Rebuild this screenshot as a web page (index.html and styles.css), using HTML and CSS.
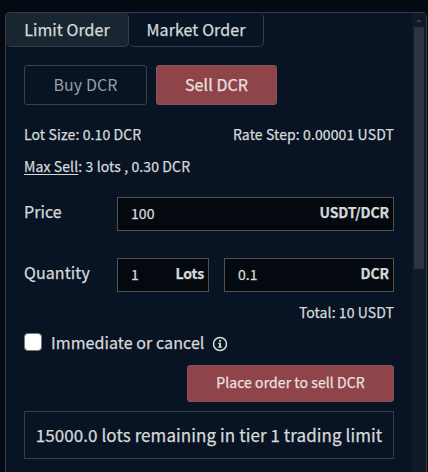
FILE: index.html
```html
<!DOCTYPE html>
<html lang="en">
<head>
<meta charset="utf-8">
<title>Order form</title>
<link rel="stylesheet" href="styles.css">
</head>
<body>
<main class="panel">
  <section class="content">
    <nav class="tabs">
      <div class="tab active"><span>Limit Order</span></div>
      <div class="tab"><span>Market Order</span></div>
    </nav>
    <form class="form">
      <div class="sides">
        <button type="button" class="btn buy"><span>Buy DCR</span></button>
        <button type="button" class="btn sell"><span>Sell DCR</span></button>
      </div>
      <div class="info"><span class="lot">Lot Size: 0.10 DCR</span><span class="step">Rate Step: 0.00001 USDT</span></div>
      <div class="info max"><span><u>Max Sell</u>: 3 lots , 0.30 DCR</span></div>
      <div class="row price">
        <label>Price</label>
        <div class="field"><span>100</span><b>USDT/DCR</b></div>
      </div>
      <div class="row qty">
        <label>Quantity</label>
        <div class="field lots"><span>1</span><b>Lots</b></div>
        <div class="field"><span>0.1</span><b>DCR</b></div>
      </div>
      <div class="total"><span>Total: 10 USDT</span></div>
      <div class="immediate">
        <i class="check"></i>
        <span>Immediate or cancel</span>
        <svg class="tip" viewBox="0 0 16 16" width="16" height="16"><circle cx="8" cy="8" r="6.5" fill="none" stroke="currentColor" stroke-width="1.5"/><path d="M7 4h2v1.8H7zM6.2 6.8H9v3.7h.9v1.2H6.2v-1.2h.9V8h-.9z" fill="currentColor"/></svg>
      </div>
      <div class="submit"><button type="button" class="btn place"><span>Place order to sell DCR</span></button></div>
      <div class="limit"><span>15000.0 lots remaining in tier 1 trading limit</span></div>
    </form>
  </section>
  <aside class="scrollbar"><i class="arrow"></i><i class="thumb"></i></aside>
</main>
</body>
</html>
```
FILE: styles.css
```css
* { box-sizing: border-box; }
html, body { height: 100%; }
body {
  margin: 0;
  padding: 12px 1px 0 5px;
  overflow: hidden;
  background: #050912;
  color: #d5dad9;
  font: 16px/20px "Noto Sans CJK SC", "Open Sans", sans-serif;
  letter-spacing: 0.08px;
  -webkit-text-stroke: 0.25px currentColor;
  white-space: nowrap;
}
.panel {
  display: flex;
  height: 480px;
  border: 1px solid #353d48;
  border-radius: 4px;
  background: #081323;
  overflow: hidden;
}
.content { flex: 1; }
.tabs { display: flex; height: 34px; }
.tab {
  display: flex;
  align-items: center;
  justify-content: center;
  width: 123px;
  padding-bottom: 2px;
  border: solid #353d48;
  border-width: 0 1px 1px 0;
  border-radius: 5px;
}
.tab.active { background: #1a2532; }
.tab:last-child { width: 135px; }
.form { padding: 18px 18px 0; }
.sides { display: flex; gap: 9px; height: 40px; }
.btn {
  padding: 0 0 2px;
  border: 1px solid #3a424c;
  border-radius: 3px;
  background: transparent;
  color: #9a9d9f;
  font: inherit;
  letter-spacing: inherit;
}
.buy { width: 123px; -webkit-text-stroke-width: 0; }
.sell { width: 121px; }
.sell, .place { background: #8f444a; border-color: #81575f; color: #e9e0e0; }
.info {
  display: flex;
  justify-content: space-between;
  margin-top: 19px;
  font-size: 14px;
  letter-spacing: 0.11px;
}
.max { margin-top: 12px; }
u { text-underline-offset: 2px; }
.row { display: flex; height: 34px; }
.price { margin-top: 21px; }
.qty { margin-top: 27px; }
label { width: 93px; padding-top: 4px; }
.field {
  flex: 1;
  display: flex;
  justify-content: space-between;
  padding: 5px 4px 0 13px;
  border: 1px solid #51524f;
  background: #04080f;
  font-size: 14px;
}
.field b { margin-top: -1px; letter-spacing: -0.1px; }
.field.lots { flex: none; width: 92px; margin-right: 15px; }
.total { margin-top: 10px; text-align: right; font-size: 14px; }
.immediate { display: flex; height: 20px; margin-top: 10px; align-items: center; }
.check { width: 18px; height: 18px; margin-right: 9px; border: 1px solid #777; border-radius: 4px; background: #fff; }
.tip { margin: 3px 0 0 8px; }
.submit { display: flex; justify-content: flex-end; margin-top: 13px; }
.place { width: 207px; height: 37px; padding-bottom: 3px; font-size: 14px; }
.limit {
  display: flex;
  align-items: center;
  justify-content: center;
  height: 48px;
  margin-top: 9px;
  border: 1px solid #353d48;
  font-size: 17px;
}
.scrollbar { width: 14px; padding: 6px 2px 0; background: #0f1a28; }
.arrow {
  display: block;
  width: 0;
  margin: 0 auto 5px;
  border: solid transparent;
  border-width: 0 3px 3px;
  border-bottom-color: #353d48;
}
.thumb { display: block; height: 242px; background: #2d3440; }
```
